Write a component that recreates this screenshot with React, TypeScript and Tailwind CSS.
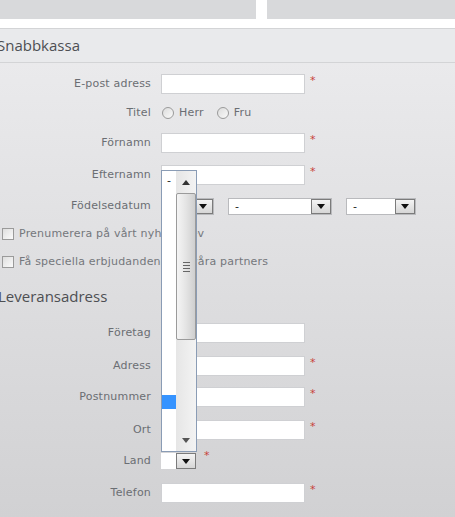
import React from 'react';

const Asterisk: React.FC<{ className?: string }> = ({ className = '' }) => (
  <span className={`self-start text-[11px] leading-[12px] text-[#c8413a] ${className}`}>*</span>
);

const TextInput: React.FC = () => (
  <div className="w-[144px] h-[20px] bg-white border border-[#cfd0d3]" />
);

const ArrowButton: React.FC<{ w?: string }> = ({ w = 'w-[20px]' }) => (
  <div className={`${w} h-full border border-[#7b7b7b] bg-gradient-to-b from-[#f4f4f4] to-[#d6d6d6] flex items-center justify-center`}>
    <svg width="8" height="5" viewBox="0 0 8 5">
      <path d="M0 0 L8 0 L4 5 Z" fill="#111" />
    </svg>
  </div>
);

const Select: React.FC<{ width: string; value?: string }> = ({ width, value = '-' }) => (
  <div className={`${width} h-[17px] bg-white border border-[#b9babd] flex items-stretch`}>
    <span className="flex-1 pl-[6px] text-[11px] leading-[15px] text-[#222]">{value}</span>
    <ArrowButton />
  </div>
);

const Label: React.FC<{ children: React.ReactNode }> = ({ children }) => (
  <span className="w-[152px] shrink-0 text-right text-[11px] tracking-[0.2px] text-[#6b6e73] pr-[1px]">{children}</span>
);

// input row with a required mark
const FieldRow: React.FC<{ label: string; mt: string; required?: boolean }> = ({ label, mt, required = true }) => (
  <div className={`flex items-center h-[20px] ${mt}`}>
    <Label>{label}</Label>
    <div className="ml-[9px]">
      <TextInput />
    </div>
    {required && <Asterisk className="ml-[5px] mt-[1px]" />}
  </div>
);

const Radio: React.FC = () => (
  <span className="w-[12px] h-[12px] rounded-full border border-[#9a9a9a] bg-gradient-to-br from-[#dcdcdc] to-[#fafafa]" />
);

const Checkbox: React.FC = () => (
  <span className="w-[12px] h-[12px] border border-[#9a9a9a] bg-gradient-to-br from-[#dedede] to-[#fbfbfb]" />
);

// open list of the day select
const OpenList: React.FC = () => (
  <div className="absolute left-[161px] top-[170px] w-[36px] h-[282px] border border-[#8a9cb5] bg-white flex">
    <div className="relative w-[14px]">
      <span className="absolute left-[5px] top-[3px] text-[11px] leading-[14px] text-[#222]">-</span>
      <div className="absolute left-0 top-[224px] w-[14px] h-[14px] bg-[#3593ff]" />
    </div>
    <div className="w-[20px] bg-gradient-to-r from-[#e6e6e6] to-[#f3f3f3] flex flex-col items-stretch">
      <div className="h-[22px] flex items-center justify-center">
        <svg width="8" height="5" viewBox="0 0 8 5">
          <path d="M4 0 L8 5 L0 5 Z" fill="#333" />
        </svg>
      </div>
      <div className="h-[147px] rounded-[2px] border border-[#9b9b9b] bg-gradient-to-r from-[#f5f5f5] via-[#e4e4e4] to-[#cfcfcf] flex items-center justify-center">
        <div className="flex flex-col gap-[2px]">
          <div className="w-[7px] h-[1px] bg-[#666]" />
          <div className="w-[7px] h-[1px] bg-[#666]" />
          <div className="w-[7px] h-[1px] bg-[#666]" />
          <div className="w-[7px] h-[1px] bg-[#666]" />
        </div>
      </div>
      <div className="flex-1" />
      <div className="h-[22px] flex items-center justify-center">
        <svg width="8" height="5" viewBox="0 0 8 5">
          <path d="M0 0 L8 0 L4 5 Z" fill="#555" />
        </svg>
      </div>
    </div>
  </div>
);

const App: React.FC = () => {
  return (
    <div className="relative w-[455px] h-[517px] overflow-hidden bg-white font-['DejaVu_Sans',sans-serif]">
      {/* Top tabs */}
      <div className="flex h-[19px] gap-[11px]">
        <div className="w-[256px] bg-[#d8d9db]" />
        <div className="flex-1 bg-[#d8d9db]" />
      </div>
      <div className="h-[9px]" />

      {/* Section header */}
      <div className="h-[35px] border-y border-[#d3d4d6] bg-[#e9eaec] flex items-center">
        <h2 className="-ml-[3px] text-[15px] font-['Open_Sans',sans-serif] text-[#4d4f53]">Snabbkassa</h2>
      </div>

      {/* Form body */}
      <div className="h-[455px] bg-gradient-to-b from-[#eaeaec] to-[#d1d1d3] flex flex-col pt-[11px]">
        <FieldRow label="E-post adress" mt="mt-0" />

        <div className="flex items-center h-[20px] mt-[9px]">
          <Label>Titel</Label>
          <div className="ml-[10px] flex items-center text-[11px] tracking-[0.2px] text-[#6b6e73]">
            <Radio />
            <span className="ml-[5px]">Herr</span>
            <span className="ml-[13px] flex"><Radio /></span>
            <span className="ml-[5px]">Fru</span>
          </div>
        </div>

        <FieldRow label="Förnamn" mt="mt-[10px]" />
        <FieldRow label="Efternamn" mt="mt-[12px]" />

        <div className="flex items-center h-[20px] mt-[11px]">
          <Label>Födelsedatum</Label>
          <div className="ml-[9px] flex items-center gap-[14px]">
            <Select width="w-[53px]" />
            <Select width="w-[104px]" />
            <Select width="w-[70px]" />
          </div>
        </div>

        <div className="flex items-center h-[20px] mt-[8px] pl-[2px] text-[11px] tracking-[0.2px] text-[#74777c]">
          <Checkbox />
          <span className="ml-[5px]">Prenumerera på vårt nyhetsbrev</span>
        </div>
        <div className="flex items-center h-[20px] mt-[8px] pl-[2px] text-[11px] tracking-[0.2px] text-[#74777c]">
          <Checkbox />
          <span className="ml-[5px]">Få speciella erbjudanden från våra partners</span>
        </div>

        <div className="h-[20px] mt-[14px] flex items-center">
          <h2 className="-ml-[2px] text-[15px] font-['Open_Sans',sans-serif] text-[#4d4f53]">Leveransadress</h2>
        </div>

        <FieldRow label="Företag" mt="mt-[17px]" required={false} />
        <FieldRow label="Adress" mt="mt-[13px]" />
        <FieldRow label="Postnummer" mt="mt-[11px]" />
        <FieldRow label="Ort" mt="mt-[13px]" />

        <div className="flex items-center h-[20px] mt-[11px]">
          <Label>Land</Label>
          <div className="ml-[9px] w-[35px] h-[16px] bg-white flex items-stretch justify-end">
            <ArrowButton />
          </div>
          <Asterisk className="ml-[8px] -mt-[1px]" />
        </div>

        <FieldRow label="Telefon" mt="mt-[12px]" />
      </div>

      <OpenList />
    </div>
  );
};

export default App;
